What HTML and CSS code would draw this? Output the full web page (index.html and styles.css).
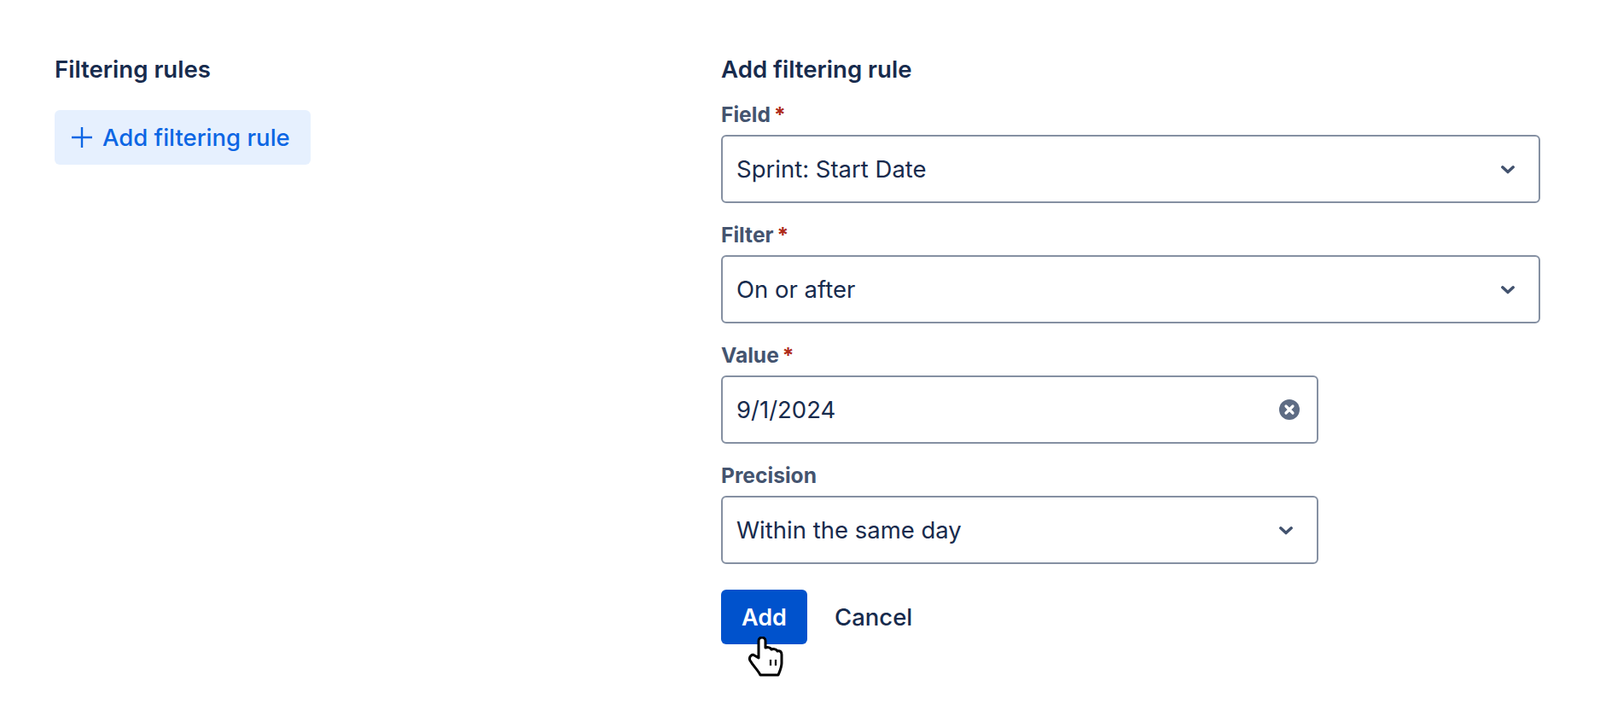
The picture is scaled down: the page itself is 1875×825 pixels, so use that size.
FILE: index.html
```html
<!DOCTYPE html>
<html>
    <head>
        <title>filtering rules</title>
        <meta name='viewport' content='width=device-width, initial-scale=1.0'>
        <link rel="stylesheet" href="styles.css">
    </head>
    <body>
        <div class="page">
            <section class="rules">
                <h2>Filtering rules</h2>
                <button class="add-rule" type="button">
                    <svg class="plus" viewBox="0 0 24 24" width="24" height="24"><path d="M12 0v24M0 12h24" fill="none" stroke="currentColor" stroke-width="2.4"/></svg>
                    Add filtering rule
                </button>
            </section>
            <form class="rule-form">
                <h2>Add filtering rule</h2>
                <div class="field">
                    <div class="label">Field<span class="req">*</span></div>
                    <div class="box">
                        <span>Sprint: Start Date</span>
                        <svg class="chevron" viewBox="0 0 16 10" width="16" height="10"><path d="M1.8 1.8L8 7.6l6.2-5.8" fill="none" stroke="#42526e" stroke-width="3.4" stroke-linecap="round" stroke-linejoin="round"/></svg>
                    </div>
                </div>
                <div class="field">
                    <div class="label">Filter<span class="req">*</span></div>
                    <div class="box">
                        <span>On or after</span>
                        <svg class="chevron" viewBox="0 0 16 10" width="16" height="10"><path d="M1.8 1.8L8 7.6l6.2-5.8" fill="none" stroke="#42526e" stroke-width="3.4" stroke-linecap="round" stroke-linejoin="round"/></svg>
                    </div>
                </div>
                <div class="field short">
                    <div class="label">Value<span class="req">*</span></div>
                    <div class="box">
                        <span>9/1/2024</span>
                        <svg class="clear" viewBox="0 0 24 24" width="24" height="24"><circle cx="12" cy="12" r="12" fill="#5e6c84"/><path d="M8 8l8 8M16 8l-8 8" stroke="#fff" stroke-width="3.2" stroke-linecap="round"/></svg>
                    </div>
                </div>
                <div class="field short">
                    <div class="label">Precision</div>
                    <div class="box">
                        <span>Within the same day</span>
                        <svg class="chevron" viewBox="0 0 16 10" width="16" height="10"><path d="M1.8 1.8L8 7.6l6.2-5.8" fill="none" stroke="#42526e" stroke-width="3.4" stroke-linecap="round" stroke-linejoin="round"/></svg>
                    </div>
                </div>
                <div class="actions">
                    <button class="primary" type="button">Add</button>
                    <button class="subtle" type="button">Cancel</button>
                    <svg class="cursor" viewBox="0 0 42 48" width="42" height="48">
                        <path d="M13 25V5a4 4 0 0 1 8 0V13c3-1 6 0 7 2 3-1 6 0 7 2 3-1 5 1 5 4v10c0 5-2 9-4 14H15C12 39 7 35 3 28c-2-4 2-8 5-6z" fill="#fff" stroke="#000" stroke-width="3" stroke-linejoin="round"/>
                        <path d="M27 27v7M33 27v7" stroke="#000" stroke-width="2.2"/>
                    </svg>
                </div>
            </form>
        </div>
    </body>
</html>
```

FILE: styles.css
```css
* {
    margin: 0px;
    padding: 0px;
    box-sizing: border-box;
}
body {
    font-family: Inter, "Liberation Sans", sans-serif;
    color: #172b4d;
    background: #fff;
}
.page {
    display: flex;
    min-height: 825px;
    padding: 64px 70px 0 64px;
}
.rules {
    width: 781px;
    flex: none;
}
h2 {
    font-size: 27.6px;
    font-weight: 600;
    line-height: 34px;
    margin-bottom: 21px;
}
.add-rule {
    display: flex;
    align-items: center;
    gap: 12px;
    height: 64px;
    width: 300px;
    margin-top: 31px;
    padding-left: 20px;
    border: 0;
    border-radius: 6px;
    background: #e6f0fe;
    color: #0c66e4;
    font: 500 27.5px Inter, sans-serif;
}
.rules h2 {
    margin-bottom: 0;
}
.rule-form {
    flex: 1;
}
.field {
    margin-bottom: 22px;
}
.short {
    width: 700px;
}
.label {
    font-size: 24.6px;
    font-weight: 700;
    line-height: 31px;
    color: #44546f;
    margin-bottom: 8px;
}
.req {
    color: #ae2a19;
    margin-left: 4px;
}
.box {
    display: flex;
    align-items: center;
    justify-content: space-between;
    height: 80px;
    padding: 0 28px 0 16px;
    border: 2px solid #8590a2;
    border-radius: 6px;
    font-size: 27.5px;
}
.chevron {
    margin-top: 2px;
}
.short .clear {
    margin-right: -8px;
}
.actions {
    position: relative;
    display: flex;
    align-items: center;
    gap: 32px;
    margin-top: 30px;
}
.primary {
    width: 101px;
    height: 64px;
    border: 0;
    border-radius: 6px;
    background: #0052cc;
    color: #fff;
    font: 600 27px Inter, sans-serif;
}
.subtle {
    border: 0;
    background: none;
    color: #172b4d;
    font: 500 27.5px Inter, sans-serif;
}
.cursor {
    position: absolute;
    left: 31px;
    top: 55px;
}
```
